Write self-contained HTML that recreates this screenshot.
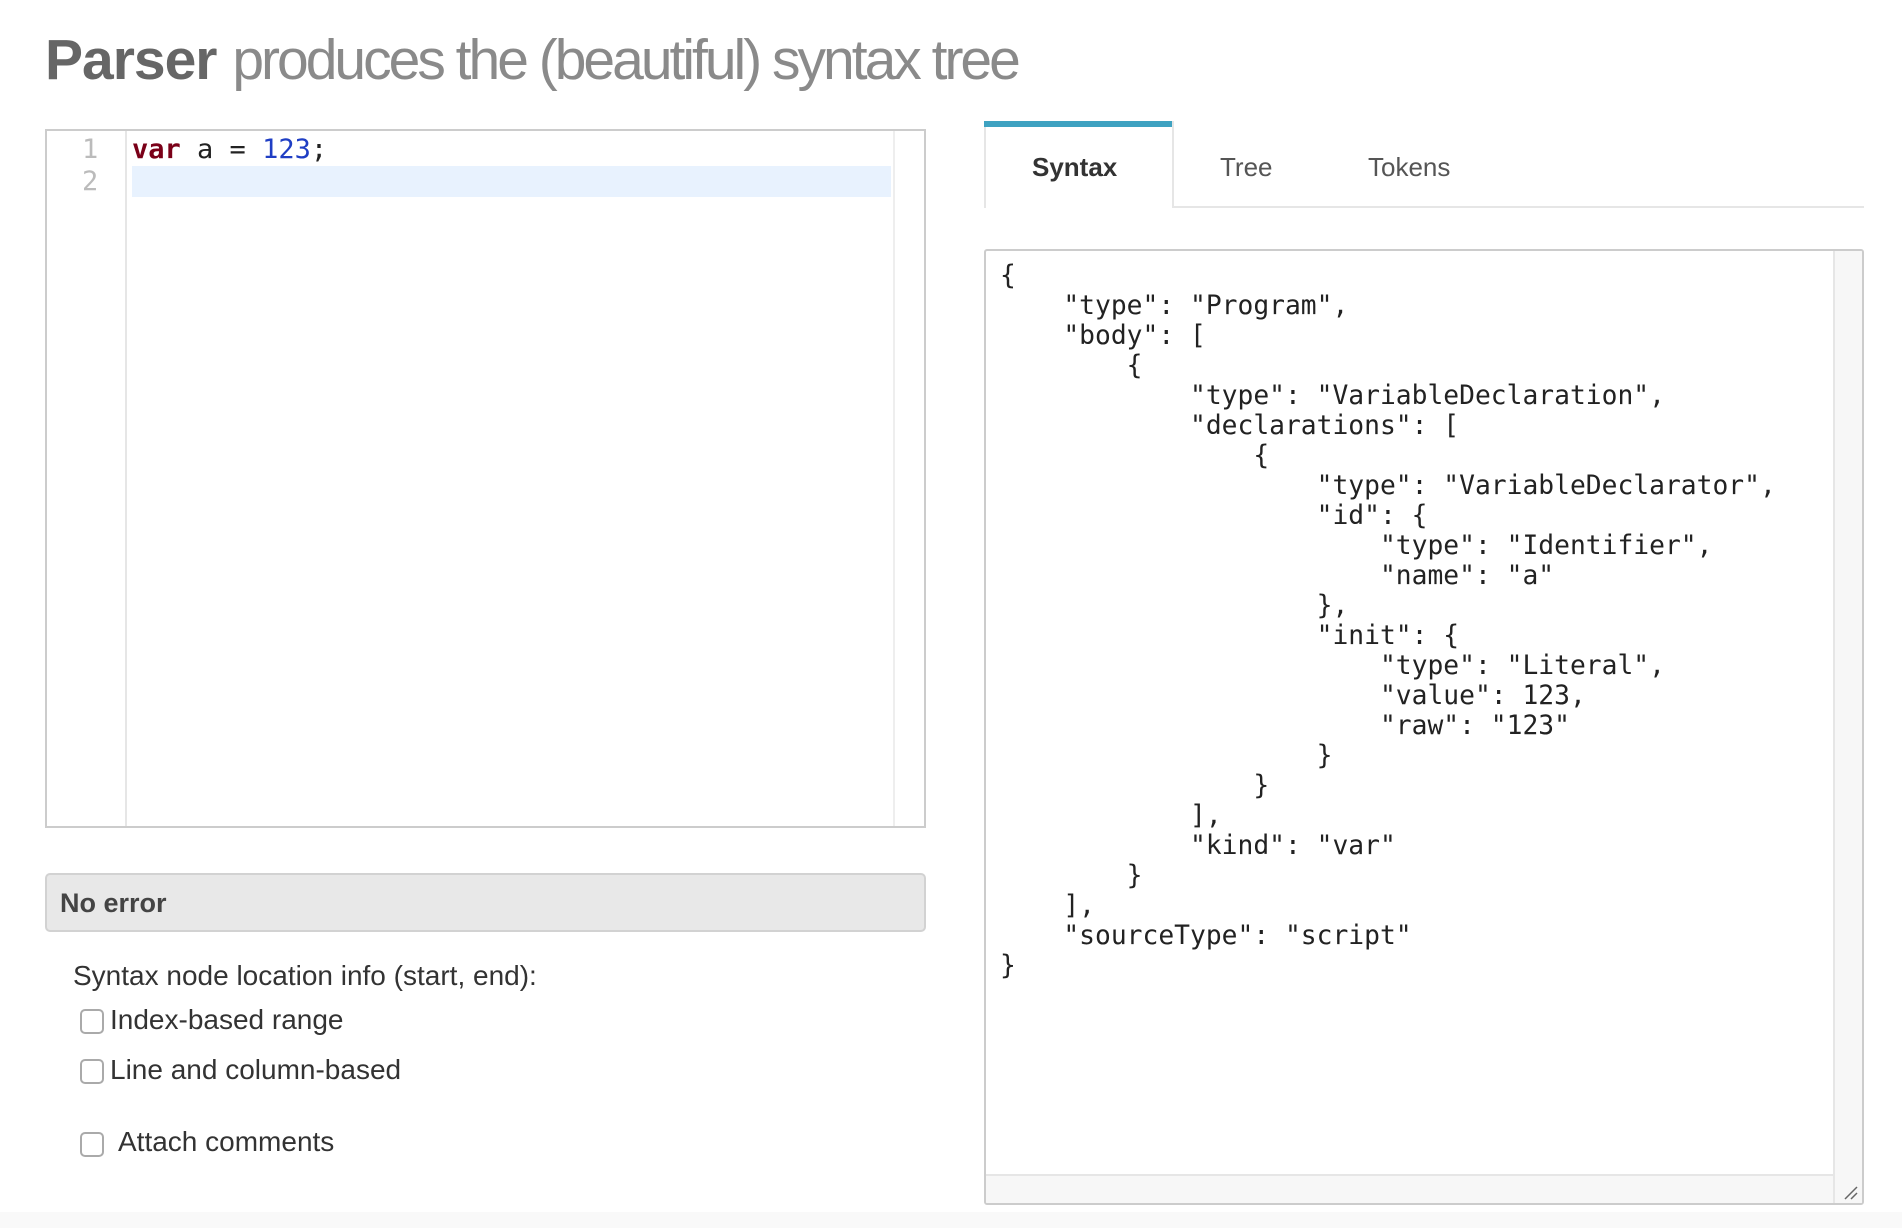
<!DOCTYPE html>
<html><head><meta charset="utf-8"><style>
html,body{margin:0;padding:0;width:1902px;height:1228px;background:#fff;overflow:hidden;font-family:"Liberation Sans",Arial,sans-serif;position:relative}
.abs{position:absolute}
h1{position:absolute;left:45px;top:22px;margin:0;font-size:57px;font-weight:normal;color:#8a8a8a;white-space:nowrap;line-height:76px}
h1 b{color:#666;font-weight:bold;letter-spacing:-1px}
h1 span{letter-spacing:-3px}
.ed{left:45px;top:129px;width:877px;height:695px;border:2px solid #ccc;background:#fff}
.gut{left:0;top:0;width:78px;height:100%;border-right:2px solid #e6e6e6}
.vs{left:846px;top:0;width:0;height:100%;border-left:2px solid #eee}
.mono{font-family:"DejaVu Sans Mono","Liberation Mono",monospace}
.ln{color:#bbb;font-size:27px;left:35px;line-height:34px}
.code{left:85px;font-size:27px;line-height:34px;color:#222;white-space:pre}
.err{left:45px;top:873px;width:877px;height:55px;background:#e8e8e8;border:2px solid #d2d2d2;border-radius:5px;box-sizing:content-box}
.err span{position:absolute;left:13px;top:13px;font-size:27px;font-weight:bold;color:#444}
.lbl{font-size:28px;color:#333;white-space:nowrap}
.cb{width:20px;height:21px;border:2px solid #aaa;border-radius:5px;background:#fff}
.tabline{left:1172px;top:206px;width:692px;height:2px;background:#e6e6e6}
.tab{left:984px;top:121px;width:186px;height:87px;border-left:2px solid #e6e6e6;border-right:2px solid #e6e6e6;background:#fff}
.tabtop{left:984px;top:121px;width:188px;height:6px;background:#3ea2c1}
.tt{font-size:26px;color:#555;top:152px}
.out{left:984px;top:249px;width:876px;height:952px;border:2px solid #ccc;border-radius:3px;background:#fff;overflow:hidden}
.json{left:14px;top:10px;font-size:26.3px;line-height:30px;color:#222;white-space:pre}
</style></head><body>
<h1><b>Parser</b> <span>produces the (beautiful) syntax tree</span></h1>

<div class="abs ed">
  <div class="abs gut"></div>
  <div class="abs vs"></div>
  <div class="abs" style="left:85px;top:35px;width:759px;height:31px;background:#e8f2fe"></div>
  <div class="abs mono ln" style="top:2px">1</div>
  <div class="abs mono ln" style="top:34px">2</div>
  <div class="abs mono code" style="top:2px"><span style="color:#7a0018;font-weight:bold">var</span> a = <span style="color:#1f3ec4">123</span>;</div>
</div>

<div class="abs err"><span>No error</span></div>

<div class="abs lbl" style="left:73px;top:960px">Syntax node location info (start, end):</div>
<div class="abs cb" style="left:80px;top:1009px"></div>
<div class="abs lbl" style="left:110px;top:1004px">Index-based range</div>
<div class="abs cb" style="left:80px;top:1059px"></div>
<div class="abs lbl" style="left:110px;top:1054px">Line and column-based</div>
<div class="abs cb" style="left:80px;top:1132px"></div>
<div class="abs lbl" style="left:118px;top:1126px">Attach comments</div>

<div class="abs" style="left:0;top:1212px;width:1902px;height:16px;background:#f9f9f9"></div>

<div class="abs tabline"></div>
<div class="abs tab"></div>
<div class="abs tabtop"></div>
<div class="abs tt" style="left:1032px;font-weight:bold;color:#333">Syntax</div>
<div class="abs tt" style="left:1220px">Tree</div>
<div class="abs tt" style="left:1368px">Tokens</div>

<div class="abs out">
  <div class="abs mono json">{
    "type": "Program",
    "body": [
        {
            "type": "VariableDeclaration",
            "declarations": [
                {
                    "type": "VariableDeclarator",
                    "id": {
                        "type": "Identifier",
                        "name": "a"
                    },
                    "init": {
                        "type": "Literal",
                        "value": 123,
                        "raw": "123"
                    }
                }
            ],
            "kind": "var"
        }
    ],
    "sourceType": "script"
}</div>
  <div class="abs" style="left:847px;top:0;width:29px;height:952px;background:#f7f7f7;border-left:2px solid #e6e6e6"></div>
  <div class="abs" style="left:0;top:923px;width:876px;height:29px;background:#f7f7f7;border-top:2px solid #e6e6e6"></div>
  <div class="abs" style="left:847px;top:923px;width:29px;height:29px;border-left:2px solid #e6e6e6;background:#f7f7f7"></div>
  <svg class="abs" style="left:855px;top:930px" width="20" height="20"><path d="M4 18 L16 6 M10 18 L16 12" stroke="#666" stroke-width="1.5"/></svg>
</div>
</body></html>
